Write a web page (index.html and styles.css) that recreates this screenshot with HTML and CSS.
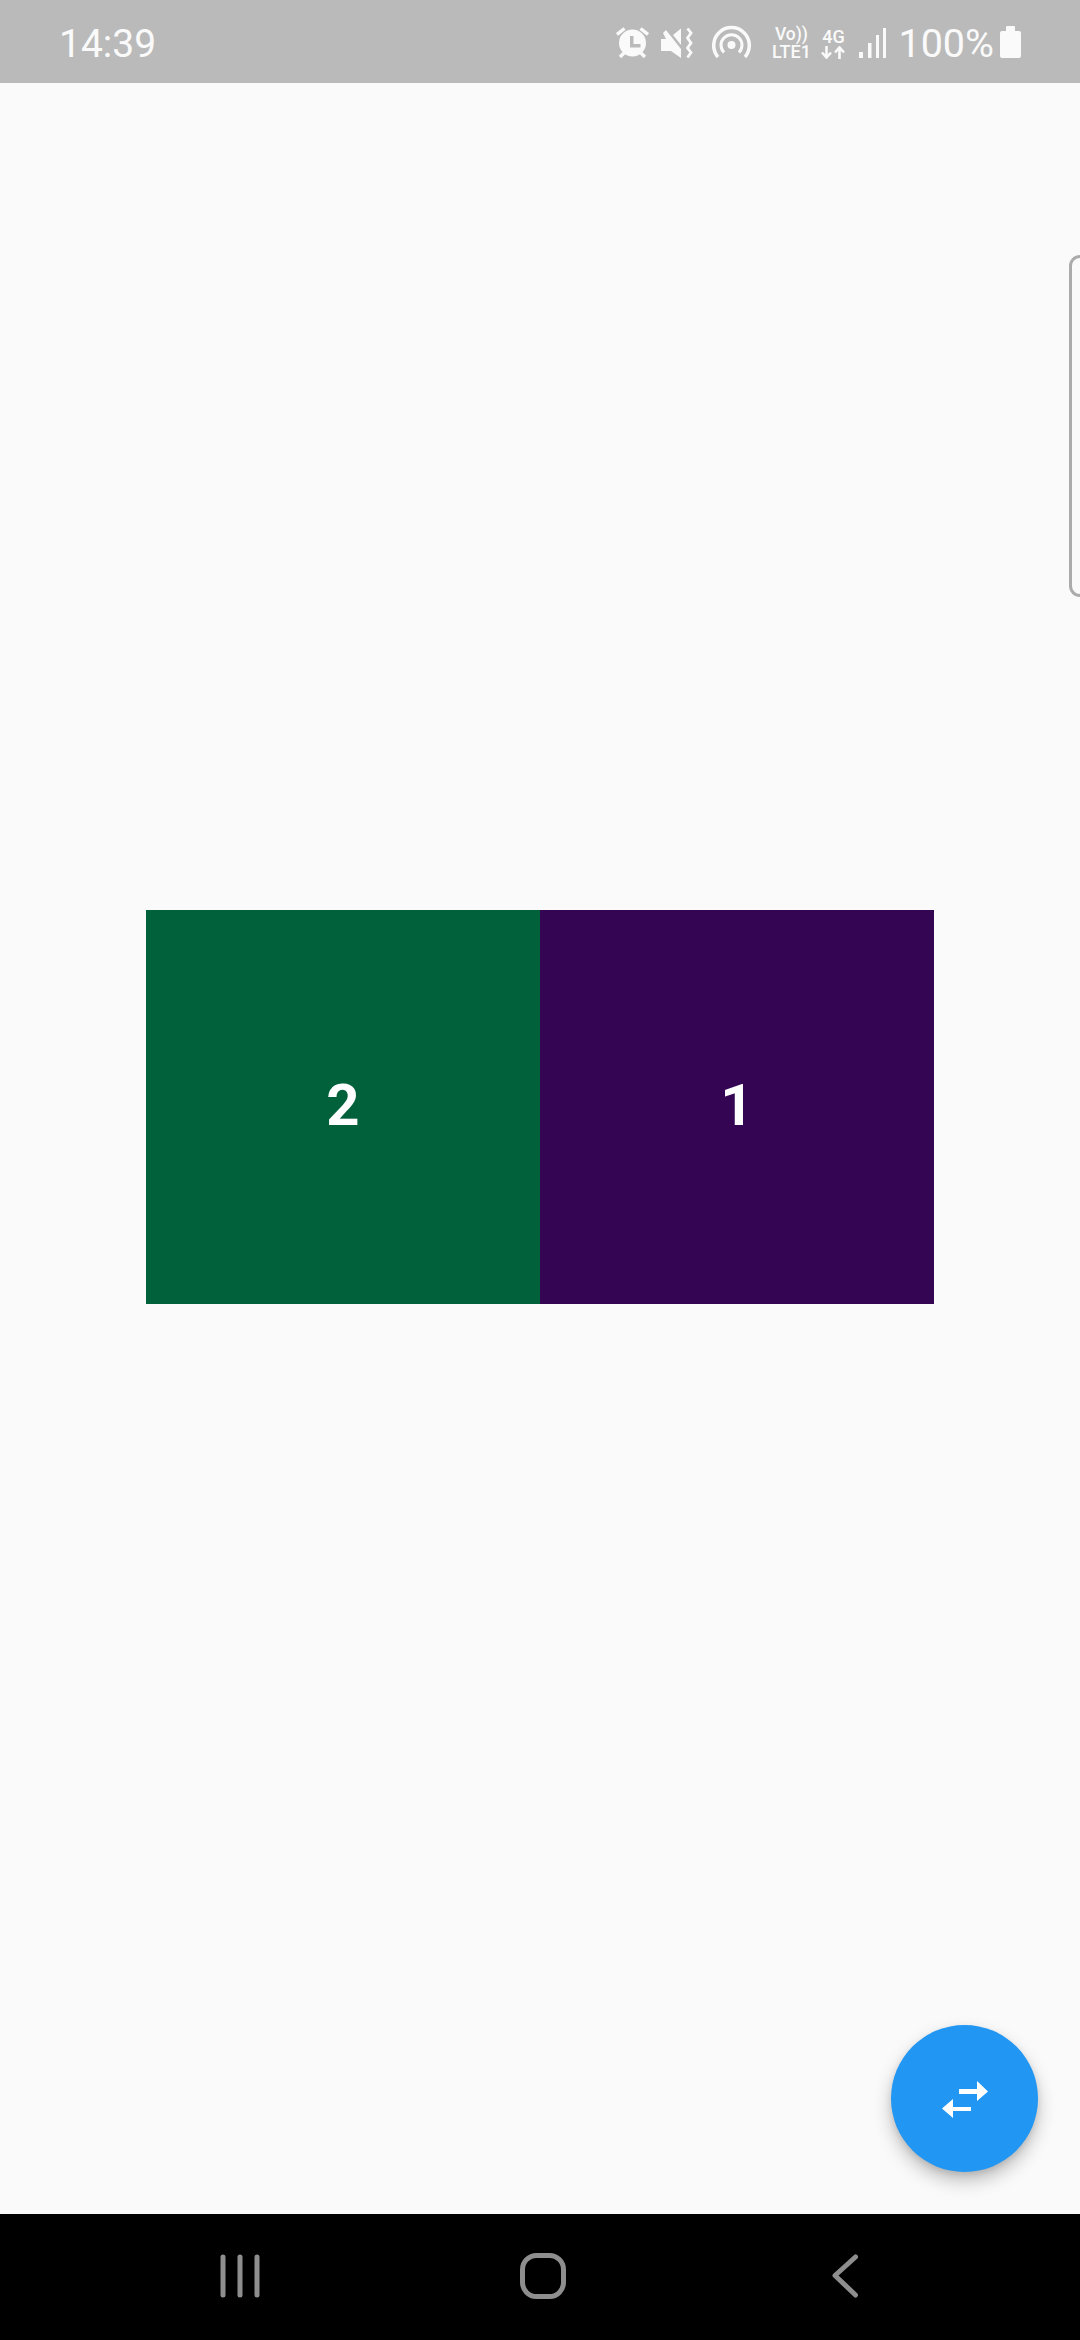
FILE: index.html
```html
<!DOCTYPE html>
<html lang="en">
<head>
<meta charset="utf-8">
<title>Swap</title>
<link rel="stylesheet" href="styles.css">
</head>
<body>
<div class="screen">
  <header class="status">
    <span class="time">14:39</span>
    <div class="status-right">
      <svg class="ic alarm" viewBox="0 0 33 31" width="33" height="31">
        <circle cx="16.500" cy="16" r="13.500" fill="#fafafa"/>
        <path d="M14 9h3.500v8h7v3.500H14z" fill="#bababa"/>
        <path d="M1 7.500 8.500 1.500M32 7.500 24.500 1.500M4 30l5-5M29 30l-5-5" stroke="#fafafa" stroke-width="3.400" fill="none"/>
      </svg>
      <svg class="ic mute" viewBox="0 0 32 30" width="32" height="30">
        <path d="M0 11h5L2 5l3-3 15 19v9l-10-7H0z" fill="#fafafa"/>
        <path d="M12 7l8-6.500V17z" fill="#fafafa"/>
        <path d="M26.500 0.500l3.500 4.500-3.500 5 3.500 5-3.500 5 3.500 4.500-3.500 5" stroke="#fafafa" stroke-width="2.800" fill="none"/>
      </svg>
      <svg class="ic hotspot" viewBox="0 0 40 34" width="40" height="34">
        <circle cx="19.500" cy="20" r="4" fill="#fafafa"/>
        <path d="M12 27.500A10.500 10.500 0 1 1 27 27.500" stroke="#fafafa" stroke-width="3" fill="none"/>
        <path d="M6 32A17.800 17.800 0 1 1 33 32" stroke="#fafafa" stroke-width="3.500" fill="none"/>
      </svg>
      <div class="volte">
        <span class="volte-row volte-top">Vo))</span>
        <span class="volte-row">LTE1</span>
      </div>
      <div class="net">
        <span class="net-label">4G</span>
        <svg viewBox="0 0 24 13" width="24" height="13">
          <path d="M5.500 0v11M1 6.500l4.500 5 4.500-5M18.500 13V2M14 6.500l4.500-5 4.500 5" stroke="#fafafa" stroke-width="2.600" fill="none"/>
        </svg>
      </div>
      <svg class="ic signal" viewBox="0 0 27 30" width="27" height="30">
        <path d="M0 24h4v6H0zM9 15h3.500v15H9zM17 7h3v23h-3zM24 0h3v30h-3z" fill="#fafafa"/>
      </svg>
      <span class="pct">100%</span>
      <svg class="ic battery" viewBox="0 0 21 32" width="21" height="32">
        <path d="M7 0h7a1 1 0 0 1 1 1v4h4a2 2 0 0 1 2 2v23a2 2 0 0 1-2 2H2a2 2 0 0 1-2-2V7a2 2 0 0 1 2-2h4V1a1 1 0 0 1 1-1z" fill="#fafafa"/>
      </svg>
    </div>
  </header>
  <main class="content">
    <div class="edge-handle"></div>
    <div class="pair">
      <div class="tile tile-green">2</div>
      <div class="tile tile-purple">1</div>
    </div>
    <button class="fab" type="button" aria-label="Swap">
      <svg viewBox="0 0 48 38" width="48" height="38">
        <path d="M18 9h18V1l11 10.500L36 21v-7H18z" fill="#fff"/>
        <path d="M30 27H12v-8L1 28.500 12 38v-7h18z" fill="#fff"/>
      </svg>
    </button>
  </main>
  <nav class="navbar">
    <svg class="nav-ic nav-recents" viewBox="0 0 40 44" width="40" height="44">
      <path d="M3 3v38M20 3v38M37 3v38" stroke="#8e8e8e" stroke-width="5" stroke-linecap="round" fill="none"/>
    </svg>
    <svg class="nav-ic nav-home" viewBox="0 0 46 46" width="46" height="46">
      <rect x="2.500" y="2.500" width="41" height="41" rx="14" stroke="#8e8e8e" stroke-width="5" fill="none"/>
    </svg>
    <svg class="nav-ic nav-back" viewBox="0 0 27 44" width="27" height="44">
      <path d="M23.500 3 3 21.500 23.500 41" stroke="#8e8e8e" stroke-width="5" stroke-linecap="round" stroke-linejoin="round" fill="none"/>
    </svg>
  </nav>
</div>
</body>
</html>
```

FILE: styles.css
```css
* { box-sizing: border-box; }
html, body { margin: 0; padding: 0; }
body { font-family: Roboto, "Liberation Sans", sans-serif; background: #fafafa; }

.screen {
  width: 1080px;
  height: 2340px;
  display: flex;
  flex-direction: column;
  overflow: hidden;
}

.status {
  height: 83px;
  flex: none;
  background: #bababa;
  color: #fafafa;
  display: flex;
  align-items: center;
  justify-content: space-between;
  padding: 0 59px 0 59px;
}
.time { font-size: 39px; line-height: 1; margin-top: 5px; }
.status-right { display: flex; align-items: center; }
.ic { display: block; flex: none; }
.alarm { margin-top: 1px; }
.mute { margin-left: 12px; margin-top: 2px; }
.hotspot { margin-left: 19px; margin-right: 19px; }
.volte {
  display: flex;
  flex-direction: column;
  align-items: center;
  width: 40px;
  margin-top: 2px;
  font-weight: 500;
}
.volte-row { font-size: 18px; line-height: 18px; }
.volte-top { font-size: 17.5px; }
.net {
  display: flex;
  flex-direction: column;
  align-items: center;
  width: 24px;
  margin-left: 10px;
  margin-top: 3px;
}
.net-label { font-size: 18px; font-weight: 500; line-height: 18px; }
.net svg { display: block; }
.signal { margin-left: 14px; margin-top: 2px; }
.pct { font-size: 39.5px; line-height: 1; margin-left: 12px; margin-top: 5px; }
.battery { margin-left: 6px; margin-top: 1px; }

.content {
  flex: 1;
  position: relative;
  display: flex;
  align-items: center;
  justify-content: center;
  padding-bottom: 83px;
}
.pair { display: flex; }
.tile {
  width: 394px;
  height: 394px;
  display: flex;
  align-items: center;
  justify-content: center;
  color: #fff;
  font-size: 58px;
  font-weight: 700;
  padding-bottom: 4px;
}
.tile-green { background: #00613a; }
.tile-purple { background: #330552; }

.edge-handle {
  position: absolute;
  top: 172px;
  right: 0;
  width: 11px;
  height: 342px;
  border: 3px solid #ababab;
  border-right: 0;
  border-radius: 12px 0 0 12px;
}

.fab {
  position: absolute;
  left: 891px;
  top: 1942px;
  width: 147px;
  height: 147px;
  border: 0;
  padding: 0;
  border-radius: 50%;
  background: #2196f3;
  box-shadow: 0 9px 18px rgba(0,0,0,.24), 0 3px 6px rgba(0,0,0,.1);
  display: flex;
  align-items: center;
  justify-content: center;
}

.navbar {
  height: 126px;
  flex: none;
  background: #000;
  display: flex;
  align-items: center;
  padding: 0 0 2px 220px;
}
.nav-ic { display: block; flex: none; }
.nav-home { margin-left: 260px; margin-right: 266px; }
```
